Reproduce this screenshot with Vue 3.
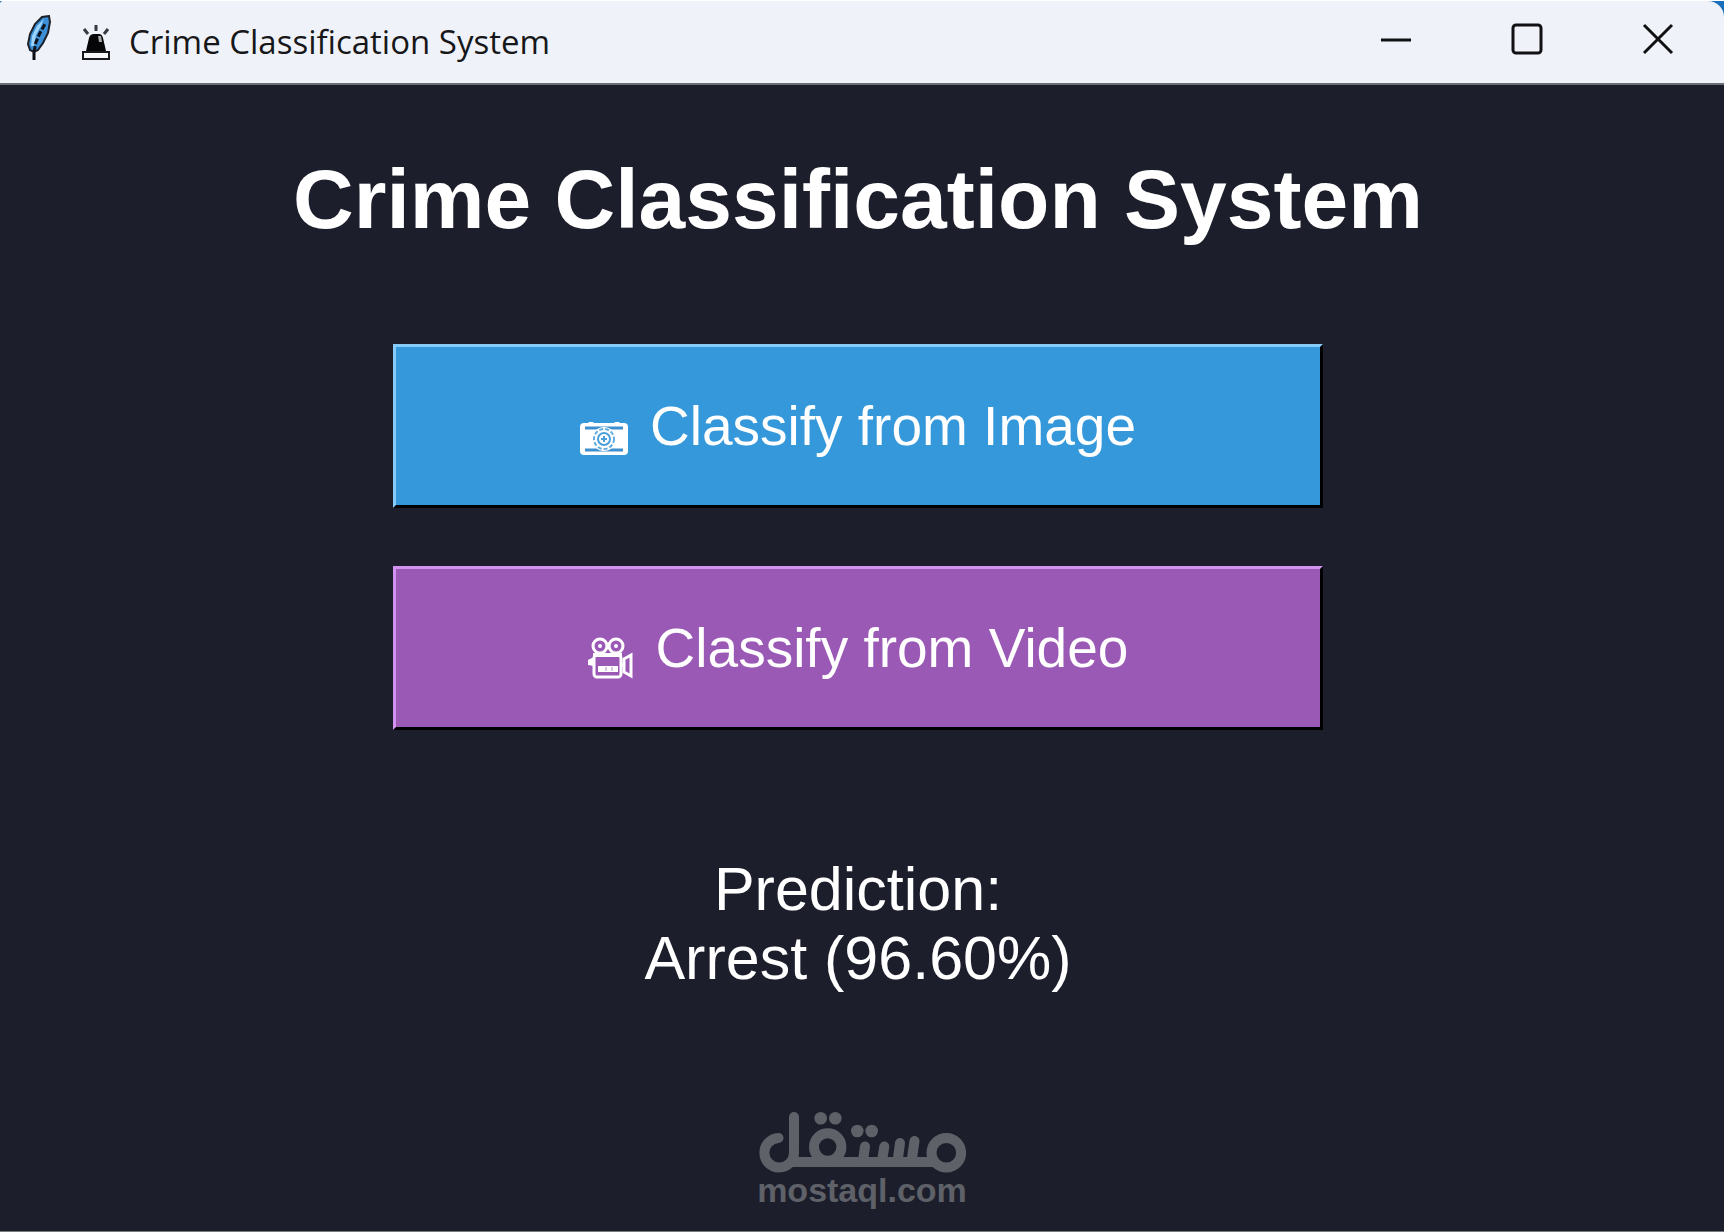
<script setup>
import { ref } from 'vue'

const title = 'Crime Classification System'

const prediction = ref({ label: 'Arrest', confidence: 96.6 })
</script>

<template>
  <div class="window">
    <header class="titlebar-wrap">
      <div class="titlebar">
        <svg class="feather" viewBox="0 0 24 46" aria-hidden="true">
          <path d="M7 45V30" stroke="#0b0b10" stroke-width="3" />
          <path d="M3 35L1 29L3 19L8 9L15 2L22 1L23 7L21 18L16 28L11 35L7 37Z" fill="#3b8fd6" stroke="#1c2028" stroke-width="2" />
          <path d="M4 31L5 21L10 11L17 4L14 11L9 20L7 31Z" fill="#9bd3fa" />
          <path d="M7 37L9 27L13 18L18 9" fill="none" stroke="#10131a" stroke-width="3" stroke-dasharray="6 2" />
        </svg>
        <svg class="siren" viewBox="0 0 30 36" aria-hidden="true">
          <path d="M15 1V7M3 5L7 10M27 5L23 10" stroke="#3a3a3e" stroke-width="3" />
          <path d="M5 27L8 14Q9 10 13 10H18Q21 10 22 14L25 27Z" fill="#060608" />
          <path d="M17 12H20L21 18H18Z" fill="#a5a7ab" />
          <rect x="2" y="28" width="26" height="7" fill="#f6f7f9" stroke="#19191d" stroke-width="2" />
        </svg>
        <span class="titlebar-text">{{ title }}</span>
        <div class="controls">
          <button type="button" aria-label="Minimize">
            <svg viewBox="0 0 32 32"><path d="M1 17H31" /></svg>
          </button>
          <button type="button" aria-label="Maximize">
            <svg viewBox="0 0 32 32"><rect x="2" y="2" width="28" height="28" rx="3" /></svg>
          </button>
          <button type="button" aria-label="Close">
            <svg viewBox="0 0 32 32"><path d="M2 2L30 30M30 2L2 30" /></svg>
          </button>
        </div>
      </div>
    </header>

    <main class="content">
      <h1>{{ title }}</h1>

      <div class="actions">
        <button type="button" class="action image">
          <svg class="camera" viewBox="0 0 48 34" aria-hidden="true">
            <path d="M7 2L9 0H13L15 2M33 2L35 0H39L41 2" fill="#fff" />
            <rect x="0" y="1" width="48" height="32" rx="4" fill="#fff" />
            <path d="M5 6H43M5 28H43" stroke="#3d8fd0" stroke-width="3" />
            <circle cx="24" cy="17" r="12" fill="#fff" />
            <circle cx="24" cy="17" r="10" fill="none" stroke="#62acdf" stroke-width="2" stroke-dasharray="4 2" />
            <circle cx="24" cy="17" r="6" fill="none" stroke="#4b9fda" stroke-width="2" />
            <path d="M24 14V20M21 17H27" stroke="#4b9fda" stroke-width="2" />
          </svg>
          <span>Classify from Image</span>
        </button>
        <button type="button" class="action video">
          <svg class="camcorder" viewBox="0 0 46 42" aria-hidden="true">
            <g fill="none" stroke="#fff" stroke-width="3">
              <circle cx="12" cy="9" r="7" />
              <circle cx="28" cy="9" r="7" />
              <rect x="6" y="18" width="27" height="22" rx="3" />
              <path d="M36 22L43 18V39L36 35Z" />
            </g>
            <circle cx="12" cy="9" r="2" fill="#fff" />
            <circle cx="28" cy="9" r="2" fill="#fff" />
            <path d="M0 23L6 20V29L0 28Z" fill="#fff" />
            <path d="M5 18H34" stroke="#fff" stroke-width="4" />
            <path d="M33 28H36" stroke="#fff" stroke-width="3" />
            <path d="M10 32H30" stroke="#fff" stroke-width="6" />
            <path d="M18 30V34M24 30V34" stroke="#b98acb" stroke-width="1" />
          </svg>
          <span>Classify from Video</span>
        </button>
      </div>

      <p class="result">
        Prediction:<br />
        {{ prediction.label }} ({{ prediction.confidence.toFixed(2) }}%)
      </p>
    </main>

    <footer class="brand">
      <svg viewBox="0 0 208 62" role="img" aria-label="مستقل">
        <g fill="none" stroke="#5f6168" stroke-width="10" stroke-linecap="round">
          <path d="M20.5 27A14.8 14.8 0 1 0 36 42V6" />
          <path d="M30 51H180" stroke-linecap="butt" />
          <circle cx="69.7" cy="36" r="13.7" />
          <circle cx="188.3" cy="41.8" r="14.8" />
          <path d="M105 50L107 35.5M124 50L126.3 35.5M139.6 50L142 32M153.6 50L156.5 30" />
        </g>
        <g fill="#5f6168">
          <circle cx="62.7" cy="7.3" r="6.3" />
          <circle cx="77.3" cy="7.3" r="6.3" />
          <circle cx="99.3" cy="20" r="6.3" />
          <circle cx="113.7" cy="20" r="6.3" />
        </g>
      </svg>
      <span>mostaql.com</span>
    </footer>
  </div>
</template>

<style>
body {
  margin: 0;
  background: #1d1e2b;
}
</style>

<style scoped>
.window {
  box-sizing: border-box;
  display: flex;
  flex-direction: column;
  min-height: 100vh;
  background: #1d1e2b;
  border-bottom: 1px solid #77777c;
  font-family: "Liberation Sans", Arial, sans-serif;
  color: #fff;
}

.titlebar-wrap {
  background: #1a6fba;
  border-top: 1px solid #fff;
}

.titlebar {
  display: flex;
  align-items: center;
  height: 82px;
  padding-left: 27px;
  background: #eff3f9;
  border-bottom: 2px solid #6d6f77;
  border-top-left-radius: 3px;
  border-top-right-radius: 16px;
  color: #17171a;
}

.feather {
  width: 24px;
  height: 46px;
  margin-bottom: 8px;
}

.siren {
  width: 30px;
  height: 36px;
  margin-left: 30px;
}

.titlebar-text {
  margin-left: 18px;
  padding-bottom: 2px;
  font-family: "Open Sans", "Noto Sans", sans-serif;
  font-size: 33px;
}

.controls {
  display: flex;
  align-self: stretch;
  margin-left: auto;
}

.controls button {
  display: flex;
  justify-content: center;
  width: 131px;
  padding: 22px 2px 0 0;
  border: 0;
  background: none;
}

.controls svg {
  width: 32px;
  height: 32px;
  fill: none;
  stroke: #111114;
  stroke-width: 3;
}

.content {
  display: flex;
  flex-direction: column;
  align-items: center;
  padding: 66px 8px 0 0;
}

h1 {
  margin: 0;
  font-size: 84px;
  line-height: 96px;
}

.actions {
  display: flex;
  flex-direction: column;
  gap: 58px;
  width: 54vw;
  margin-top: 97px;
}

.action {
  display: flex;
  align-items: center;
  justify-content: center;
  gap: 22px;
  height: 164px;
  padding: 0;
  border: 3px solid #000;
  font-family: inherit;
  font-size: 55px;
  color: #fff;
}

.image {
  background: #3498db;
  border-top-color: #86ccfb;
  border-left-color: #86ccfb;
}

.video {
  background: #9b59b6;
  border-top-color: #d292f0;
  border-left-color: #d292f0;
}

.camera {
  width: 48px;
  height: 34px;
  margin-top: 26px;
}

.camcorder {
  width: 46px;
  height: 42px;
  margin-top: 20px;
}

.result {
  margin: 125px 0 0;
  font-size: 61px;
  line-height: 69px;
  text-align: center;
}

.brand {
  display: flex;
  flex-direction: column;
  align-items: center;
  margin-top: auto;
  padding-bottom: 24px;
  font-size: 34px;
  font-weight: bold;
  line-height: 34px;
  color: #5f6168;
}

.brand svg {
  width: 208px;
  height: 62px;
}
</style>
